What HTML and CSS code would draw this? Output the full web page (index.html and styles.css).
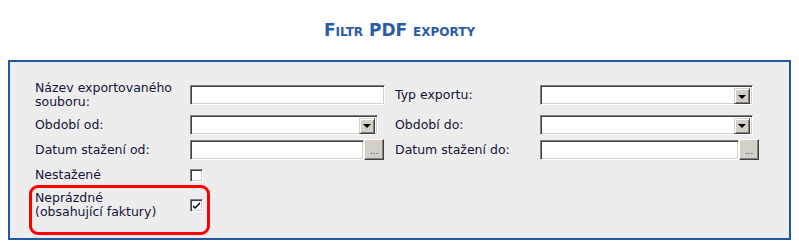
FILE: index.html
```html
<!DOCTYPE html>
<html lang="cs">
<head>
<meta charset="utf-8">
<title>Filtr PDF exporty</title>
<link rel="stylesheet" href="styles.css">
</head>
<body>
<h1 class="title">Filtr PDF exporty</h1>
<div class="panel">
  <div class="form">
    <div class="label">Název exportovaného<br>souboru:</div>
    <div class="cell"><div class="input w195"></div></div>
    <div class="label">Typ exportu:</div>
    <div class="cell"><div class="select w213"><span class="drop"><span class="tri"></span></span></div></div>

    <div class="label">Období od:</div>
    <div class="cell"><div class="select w188"><span class="drop"><span class="tri"></span></span></div></div>
    <div class="label">Období do:</div>
    <div class="cell"><div class="select w213"><span class="drop"><span class="tri"></span></span></div></div>

    <div class="label">Datum stažení od:</div>
    <div class="cell"><div class="input w174"></div><div class="btn">...</div></div>
    <div class="label">Datum stažení do:</div>
    <div class="cell"><div class="input w199"></div><div class="btn">...</div></div>

    <div class="label">Nestažené</div>
    <div class="cell"><span class="check"></span></div>
    <div class="label"></div>
    <div class="cell"></div>

    <div class="label">Neprázdné<br>(obsahující faktury)</div>
    <div class="cell"><span class="check checked"><svg width="9" height="9" viewBox="0 0 9 9"><path d="M1 4 L3 6 L8 1 L8 3 L3 8 L1 6 Z" fill="#000"/></svg></span></div>
    <div class="label"></div>
    <div class="cell"></div>
  </div>
  <div class="highlight"></div>
</div>
</body>
</html>
```
FILE: styles.css
```css
body {
  margin: 8px;
  background: #ffffff;
  font-family: "DejaVu Sans", Verdana, sans-serif;
}
.title {
  margin: 0;
  height: 52px;
  box-sizing: border-box;
  padding-top: 12px;
  font-size: 17px;
  line-height: 20px;
  font-weight: bold;
  font-variant: small-caps;
  text-align: center;
  color: #2a5ba8;
}
.panel {
  position: relative;
  border: 2px solid #2157a5;
  background: #ededed;
  padding: 18px 25px 18px 25px;
}
.form {
  display: grid;
  grid-template-columns: 155px 205px 145px auto;
  grid-template-rows: 30px 29px 21px 30px 30px;
  align-items: center;
  font-size: 12.5px;
  line-height: 14px;
  color: #141438;
}
.cell {
  display: flex;
  align-items: center;
}
.input, .select {
  box-sizing: border-box;
  height: 20px;
  background: #fff;
  border-style: solid;
  border-width: 1px;
  border-color: #808080 #ffffff #ffffff #808080;
  box-shadow: inset 1px 1px 0 #404040, inset -1px -1px 0 #d4d0c8;
}
.w195 { width: 195px; }
.w213 { width: 213px; }
.w188 { width: 188px; }
.w174 { width: 174px; }
.w199 { width: 199px; }
.select {
  display: flex;
  justify-content: flex-end;
  padding: 2px;
}
.drop {
  box-sizing: border-box;
  width: 16px;
  height: 16px;
  background: #d4d0c8;
  border-style: solid;
  border-width: 1px;
  border-color: #d4d0c8 #404040 #404040 #d4d0c8;
  box-shadow: inset 1px 1px 0 #ffffff, inset -1px -1px 0 #808080;
  display: flex;
  align-items: center;
  justify-content: center;
}
.tri {
  width: 0;
  height: 0;
  border-left: 4px solid transparent;
  border-right: 4px solid transparent;
  border-top: 4px solid #000;
  margin-top: 1px;
}
.btn {
  box-sizing: border-box;
  width: 20px;
  height: 21px;
  margin-top: -1px;
  background: #d4d0c8;
  border-style: solid;
  border-width: 1px;
  border-color: #ffffff #404040 #404040 #ffffff;
  box-shadow: inset -1px -1px 0 #808080;
  font-size: 9px;
  line-height: 9px;
  color: #3030a0;
  display: flex;
  align-items: flex-end;
  justify-content: center;
  padding-bottom: 3px;
  letter-spacing: 0;
}
.check {
  box-sizing: border-box;
  width: 13px;
  height: 13px;
  background: #fff;
  border-style: solid;
  border-width: 1px;
  border-color: #808080 #ffffff #ffffff #808080;
  box-shadow: inset 1px 1px 0 #404040, inset -1px -1px 0 #d4d0c8;
  display: flex;
  align-items: center;
  justify-content: center;
}
.check svg { display: block; }
.highlight {
  position: absolute;
  left: 19px;
  top: 123px;
  width: 181px;
  height: 50px;
  box-sizing: border-box;
  border: 3px solid #ff0000;
  border-radius: 9px;
}
```
